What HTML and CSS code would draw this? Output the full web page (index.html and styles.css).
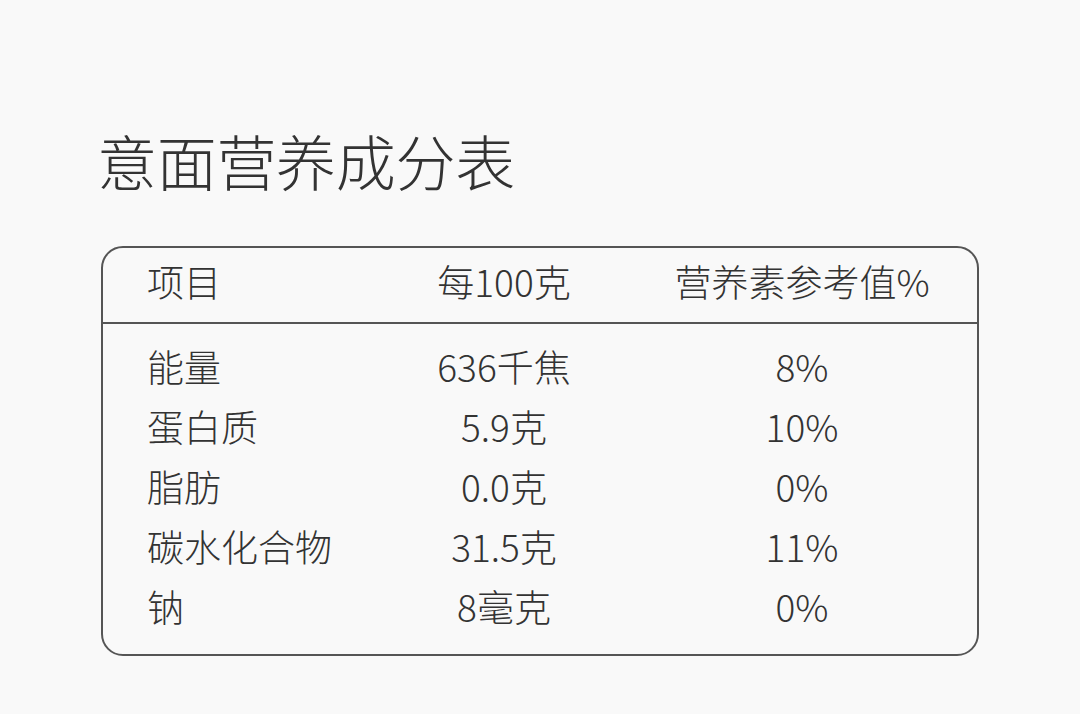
FILE: index.html
```html
<!DOCTYPE html>
<html lang="zh-CN">
<head>
<meta charset="utf-8">
<title>意面营养成分表</title>
<link rel="stylesheet" href="styles.css">
</head>
<body>
<main class="page">
  <h1 class="title">意面营养成分表</h1>
  <section class="table">
    <div class="row head">
      <div class="c1">项目</div>
      <div class="c2">每100克</div>
      <div class="c3">营养素参考值%</div>
    </div>
    <div class="body">
      <div class="row">
        <div class="c1">能量</div>
        <div class="c2">636千焦</div>
        <div class="c3">8%</div>
      </div>
      <div class="row">
        <div class="c1">蛋白质</div>
        <div class="c2">5.9克</div>
        <div class="c3">10%</div>
      </div>
      <div class="row">
        <div class="c1">脂肪</div>
        <div class="c2">0.0克</div>
        <div class="c3">0%</div>
      </div>
      <div class="row">
        <div class="c1">碳水化合物</div>
        <div class="c2">31.5克</div>
        <div class="c3">11%</div>
      </div>
      <div class="row">
        <div class="c1">钠</div>
        <div class="c2">8毫克</div>
        <div class="c3">0%</div>
      </div>
    </div>
  </section>
</main>
</body>
</html>
```

FILE: styles.css
```css
html, body {
  margin: 0;
  padding: 0;
  background: #f9f9f9;
}
body {
  font-family: "Noto Sans CJK SC", "Noto Sans", sans-serif;
  font-weight: 300;
  color: #333333;
  width: 1080px;
  height: 714px;
  overflow: hidden;
}
.page {
  padding: 130px 0 0 97px;
}
.title {
  margin: 0;
  font-size: 60px;
  line-height: 60px;
  font-weight: 300;
  letter-spacing: -0.3px;
  color: #333333;
}
.table {
  margin-top: 56px;
  margin-left: 4px;
  width: 874px;
  border: 2px solid #555555;
  border-radius: 22px;
}
.row {
  box-sizing: border-box;
  display: grid;
  grid-template-columns: 207px 300px 296px;
  padding: 0 0 6px 44px;
  height: 60px;
  align-items: center;
  font-size: 37px;
  line-height: 40px;
}
.row.head {
  height: 76px;
  padding-bottom: 8px;
  border-bottom: 2px solid #555555;
}
.body {
  padding: 15px 0 15px;
}
.c2, .c3 {
  text-align: center;
}
```
